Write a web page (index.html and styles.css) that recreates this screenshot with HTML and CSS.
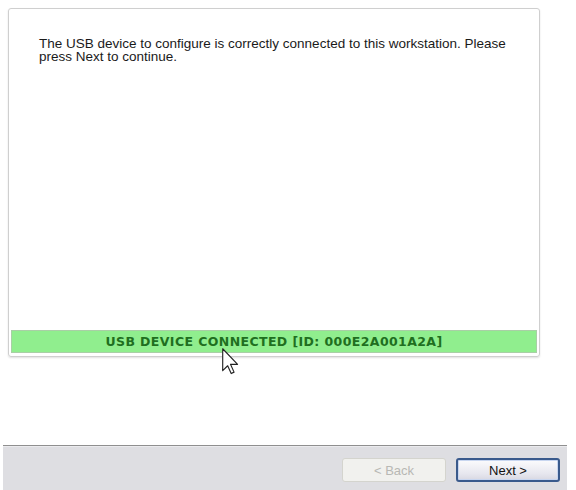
FILE: index.html
```html
<!DOCTYPE html>
<html>
<head>
<meta charset="utf-8">
<link rel="stylesheet" href="styles.css">
</head>
<body>
<div class="page">
  <div class="panel">
    <p class="message">The USB device to configure is correctly connected to this workstation. Please press Next to continue.</p>
    <div class="status">USB DEVICE CONNECTED [ID: 000E2A001A2A]</div>
  </div>
  <div class="footer">
    <button class="btn btn-disabled" disabled>&lt; Back</button>
    <button class="btn btn-primary">Next &gt;</button>
  </div>
  <svg class="cursor" width="17" height="27" viewBox="0 0 12 19">
    <path d="M0.5 0.5 L0.5 16 L4 12.5 L6.5 18 L8.5 17 L6 11.5 L11 11.5 Z" fill="#ffffff" stroke="#222" stroke-width="0.8" stroke-linejoin="round"/>
  </svg>
</div>
</body>
</html>
```

FILE: styles.css
```css
html, body {
  margin: 0;
  padding: 0;
  background: #ffffff;
}
.page {
  position: relative;
  width: 576px;
  height: 490px;
  overflow: hidden;
  font-family: "Liberation Sans", Arial, sans-serif;
}
.panel {
  box-sizing: border-box;
  margin: 8px 0 0 8px;
  width: 532px;
  height: 349px;
  border: 1px solid #cfcfcf;
  border-radius: 3px;
  box-shadow: 0 1px 2px rgba(0,0,0,0.12);
  display: flex;
  flex-direction: column;
  padding: 0 2px 3px 2px;
}
.message {
  margin: 28px 0 0 28px;
  width: 480px;
  font-size: 13.5px;
  line-height: 13px;
  color: #1a1a1a;
  letter-spacing: 0;
}
.status {
  margin-top: auto;
  height: 23px;
  box-sizing: border-box;
  background: #90ee8e;
  border: 1px solid #a9cfa6;
  color: #1f6f1f;
  font-family: "DejaVu Sans", Verdana, sans-serif;
  font-weight: bold;
  font-size: 12.5px;
  letter-spacing: 0.4px;
  display: flex;
  align-items: center;
  justify-content: center;
}
.footer {
  box-sizing: border-box;
  margin: 88px 0 0 3px;
  width: 564px;
  height: 45px;
  border-top: 1px solid #8f8f8f;
  background: #dedee2;
  box-shadow: inset 0 1px 0 #ebebee;
  display: flex;
  justify-content: flex-end;
  align-items: flex-start;
  gap: 10px;
  padding: 12px 7px 0 0;
}
.btn {
  box-sizing: border-box;
  width: 104px;
  height: 24px;
  font-family: "Liberation Sans", Arial, sans-serif;
  font-size: 13px;
  border-radius: 3px;
  padding: 0;
}
.btn-disabled {
  background: #f1f1ee;
  border: 1px solid #d4d4ce;
  color: #b8b8b4;
}
.btn-primary {
  background: linear-gradient(#fbfbfd, #e6e6ee 70%, #d8d8e2);
  border: 2px solid #3a5a8c;
  color: #111;
  box-shadow: inset 0 0 0 1px #c8d6f0;
}
.cursor {
  position: absolute;
  left: 222px;
  top: 348px;
}
```
